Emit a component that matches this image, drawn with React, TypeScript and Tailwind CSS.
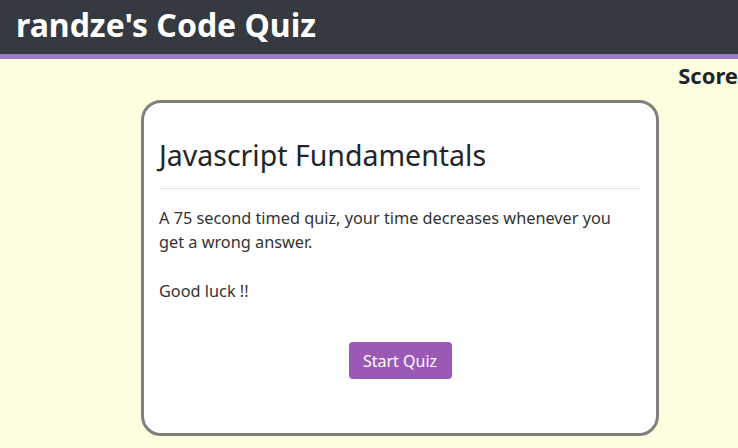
export default function App() {
    return (
        <div className="min-h-screen bg-[#fffde0] font-['Segoe_UI','Noto_Sans',sans-serif] overflow-hidden">
            <header className="bg-[#343a40] border-b-[5px] border-[#9a7fc6] h-[59px] flex items-center px-4">
                <h1 className="text-white font-bold text-[32px] leading-none -mt-[4px]">randze's Code Quiz</h1>
            </header>
            <div className="flex justify-end">
                <span className="font-bold text-[22px] leading-[32px] text-[#212529]">Score</span>
            </div>
            <div className="ml-[141px] w-[518px] h-[336px] mt-[9px] bg-white border-[3px] border-[#808080] rounded-[20px] px-[15px] pt-[34px]">
                <h2 className="text-[28.5px] leading-[36px] text-[#212529]">Javascript Fundamentals</h2>
                <hr className="mt-[15px] border-[#e5e5e5]" />
                <p className="mt-[17px] text-[16.3px] leading-[24px] text-[#333] pr-[12px]">
                    A 75 second timed quiz, your time decreases whenever you get a wrong answer.
                </p>
                <p className="mt-[25px] text-[16.3px] leading-[24px] text-[#333]">Good luck !!</p>
                <div className="flex justify-center mt-[39px]">
                    <button className="bg-[#9b59b6] text-white text-[16px] rounded-[4px] w-[103px] h-[37px]">Start Quiz</button>
                </div>
            </div>
        </div>
    );
}
